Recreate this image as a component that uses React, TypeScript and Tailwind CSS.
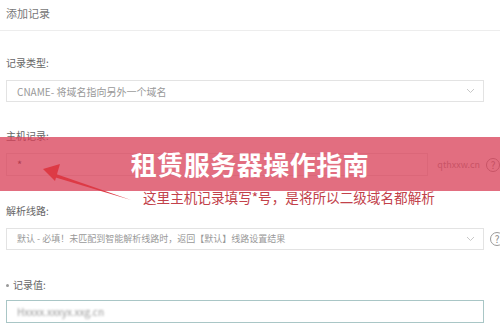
import React from "react";

const font = { fontFamily: '"Noto Sans CJK SC", "Noto Sans", sans-serif' };

function Chevron() {
  return (
    <svg width="9" height="6" viewBox="0 0 9 6" className="shrink-0">
      <path d="M1 1 L4.5 4.5 L8 1" fill="none" stroke="#c8c8c8" strokeWidth="1" />
    </svg>
  );
}

function Help() {
  return (
    <div className="ml-[6px] flex h-[14px] w-[14px] shrink-0 items-center justify-center rounded-full border border-[#999] text-[10px] leading-none text-[#888]">
      ?
    </div>
  );
}

export default function App() {
  return (
    <div className="relative h-[330px] w-[500px] overflow-hidden bg-white text-[#666]" style={font}>
      <div className="flex h-[31px] items-center border-b border-[#ededed] pl-[6px] pb-[3px] text-[11px] text-[#777]">
        添加记录
      </div>
      <div className="pl-[6px]">
        <div className="mt-[25px] h-[14px] text-[10px] leading-[14px] text-[#666]">记录类型:</div>
        <div className="mt-[10px] flex h-[22px] w-[478px] items-center justify-between border border-[#e3e3e3] pl-[10px] pr-[8px] text-[10px] text-[#999]">
          <span>CNAME- 将域名指向另外一个域名</span>
          <Chevron />
        </div>

        <div className="mt-[27px] h-[14px] text-[10px] leading-[14px] text-[#666]">主机记录:</div>
        <div className="mt-[10px] flex items-center">
          <div className="flex h-[23px] w-[436px] items-center border border-[#e3e3e3] pl-[10px] text-[11px] text-[#444]">
            *
          </div>
          <span className="ml-[9px] text-[9px] text-[#999]">qthxxw.cn</span>
          <Help />
        </div>

        <div className="mt-[28px] h-[14px] text-[10px] leading-[14px] text-[#666]">解析线路:</div>
        <div className="mt-[10px] flex items-center">
          <div className="flex h-[22px] w-[478px] shrink-0 items-center justify-between border border-[#e3e3e3] pl-[10px] pr-[8px] text-[9px] text-[#999]">
            <span>默认 - 必填！未匹配到智能解析线路时，返回【默认】线路设置结果</span>
            <Chevron />
          </div>
          <Help />
        </div>

        <div className="mt-[28px] flex h-[14px] items-center text-[10px] leading-[14px] text-[#666]">
          <span className="mr-[4px] inline-block h-[3px] w-[3px] rounded-full bg-[#999]"></span>
          记录值:
        </div>
        <div className="mt-[8px] flex h-[23px] w-[478px] items-center border border-[#a9c6c6] pl-[10px] text-[10px] text-[#999]">
          <span className="blur-[1.2px]">Hxxxx.xxxyx.xxg.cn</span>
        </div>
      </div>

      {/* banner overlay */}
      <div className="absolute left-0 right-0 top-[137px] flex h-[54px] items-center justify-center bg-[rgba(216,60,84,0.74)]">
        <span className="text-[26px] font-bold leading-none tracking-[0.5px] text-white">租赁服务器操作指南</span>
      </div>

      {/* annotation text */}
      <div className="absolute left-[143px] top-[187px] text-[13.6px] leading-[20px] text-[#c2414a]">
        这里主机记录填写*号，是将所以二级域名都解析
      </div>

      {/* arrow */}
      <svg className="absolute left-0 top-0" width="500" height="330" viewBox="0 0 500 330">
        <path d="M131 200 L56 174 L54 177 Z" fill="#dd3a45" />
        <path d="M43 169 L60 164 L55 181 Z" fill="#dd3a45" />
      </svg>
    </div>
  );
}
